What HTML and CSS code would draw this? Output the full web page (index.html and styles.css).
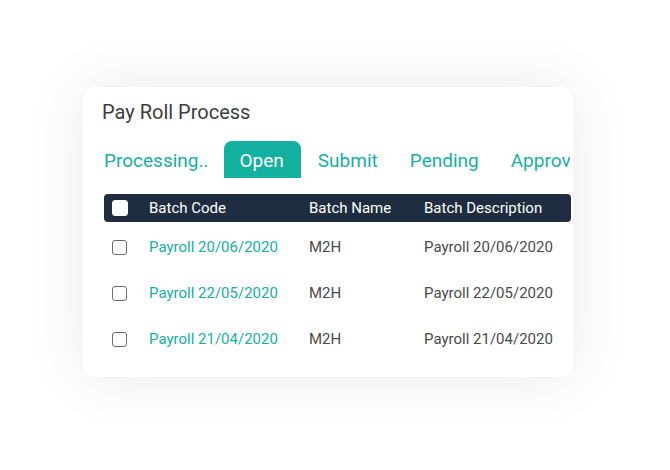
FILE: index.html
```html
<!DOCTYPE html>
<html>
<head>
<meta charset="utf-8">
<link rel="stylesheet" href="styles.css">
</head>
<body>
<div class="card">
  <h1 class="title">Pay Roll Process</h1>
  <div class="tabs">
    <span class="tab">Processing..</span>
    <span class="tab active">Open</span>
    <span class="tab">Submit</span>
    <span class="tab">Pending</span>
    <span class="tab">Approved</span>
  </div>
  <div class="table">
    <div class="row head">
      <span class="cb cb-white"></span>
      <span>Batch Code</span>
      <span>Batch Name</span>
      <span>Batch Description</span>
    </div>
    <div class="row">
      <span class="cb"></span>
      <span class="code">Payroll 20/06/2020</span>
      <span>M2H</span>
      <span>Payroll 20/06/2020</span>
    </div>
    <div class="row">
      <span class="cb"></span>
      <span class="code">Payroll 22/05/2020</span>
      <span>M2H</span>
      <span>Payroll 22/05/2020</span>
    </div>
    <div class="row">
      <span class="cb"></span>
      <span class="code">Payroll 21/04/2020</span>
      <span>M2H</span>
      <span>Payroll 21/04/2020</span>
    </div>
  </div>
</div>
</body>
</html>
```
FILE: styles.css
```css
html, body {
  margin: 0;
  padding: 0;
  background: #ffffff;
  width: 670px;
  height: 470px;
  overflow: hidden;
}
body {
  font-family: Roboto, "Liberation Sans", sans-serif;
  padding: 87px 0 0 83px;
  box-sizing: border-box;
}
.card {
  width: 490px;
  height: 290px;
  background: #fff;
  border-radius: 10px;
  box-shadow: 0 0 60px rgba(0, 0, 0, 0.09);
  box-sizing: border-box;
  padding: 12px 2px 0 21px;
}
.title {
  margin: 0 0 0 -2px;
  font-size: 20px;
  font-weight: 400;
  color: #3d3d3d;
  line-height: 26px;
}
.tabs {
  display: flex;
  margin: 16px 0 0 -16px;
  overflow: hidden;
  white-space: nowrap;
  width: 482px;
}
.tab {
  flex: none;
  padding: 0 16px;
  height: 37px;
  line-height: 39px;
  font-size: 19px;
  color: #14b0a0;
  border-radius: 8px 8px 0 0;
}
.tab.active {
  background: #14b0a0;
  color: #fff;
  margin-left: -1px;
  padding: 0 17px 0 16px;
  margin-right: 1px;
}
.table {
  margin-top: 16px;
}
.row {
  display: grid;
  grid-template-columns: 37px 160px 115px 1fr;
  align-items: center;
  padding-left: 8px;
  height: 46px;
  font-size: 15px;
  color: #4a4a4a;
}
.row.head {
  height: 28px;
  background: #1e2d3f;
  color: #fff;
  border-radius: 4px;
  margin-bottom: 2px;
}
.code {
  color: #14b0a0;
}
.cb {
  width: 13px;
  height: 13px;
  border: 1px solid #6b6b6b;
  border-radius: 3px;
  box-sizing: content-box;
}
.cb-white {
  background: #fff;
  border-color: #fff;
  width: 14px;
  height: 14px;
  border-radius: 3px;
}
```
